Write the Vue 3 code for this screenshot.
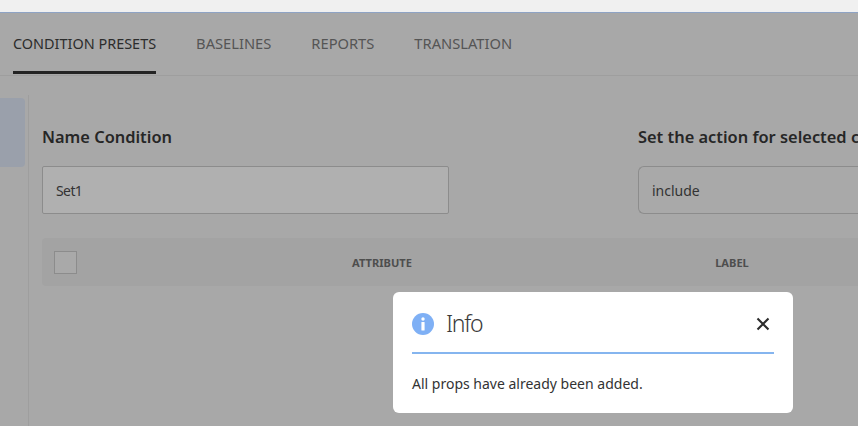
<script setup>
const tabs = ['CONDITION PRESETS', 'BASELINES', 'REPORTS', 'TRANSLATION']
</script>

<template>
  <div class="page">
    <div class="strip"></div>
    <nav class="tabs">
      <a v-for="(t, i) in tabs" :key="t" class="tab" :class="{ active: i === 0 }">{{ t }}</a>
    </nav>
    <div class="body">
      <aside class="side"><div class="side-item"></div></aside>
      <main class="main">
        <div class="fields">
          <div class="field">
            <label class="lbl">Name Condition</label>
            <div class="input name">Set1</div>
          </div>
          <div class="field second">
            <label class="lbl">Set the action for selected conditions</label>
            <div class="input select">include</div>
          </div>
        </div>
        <div class="thead">
          <div class="cell-check"><span class="check"></span></div>
          <div class="th">ATTRIBUTE</div>
          <div class="th">LABEL</div>
        </div>
      </main>
    </div>
    <div class="modal">
      <div class="m-head">
        <svg class="m-icon" width="22" height="22" viewBox="0 0 22 22">
          <circle cx="11" cy="11" r="11" fill="#7fb0f5" />
          <circle cx="11" cy="6" r="1.7" fill="#fff" />
          <rect x="9.4" y="9" width="3.2" height="8.5" rx="0.6" fill="#fff" />
        </svg>
        <span class="m-title">Info</span>
        <svg class="m-close" width="14" height="14" viewBox="0 0 14 14">
          <path d="M1.5 1.5 L12.5 12.5 M12.5 1.5 L1.5 12.5" stroke="#2c2c2c" stroke-width="2.1" fill="none" />
        </svg>
      </div>
      <p class="m-text">All props have already been added.</p>
    </div>
  </div>
</template>

<style>
html, body { margin: 0; padding: 0; }
</style>

<style scoped>
.page {
  position: relative;
  width: 858px;
  height: 426px;
  overflow: hidden;
  background: #a8a8a8;
  font-family: "Noto Sans", "Open Sans", sans-serif;
  color: #2a2a2a;
}
.strip {
  height: 12px;
  background: #f0f0f0;
  border-bottom: 1px solid #8ea3c4;
}
.tabs {
  display: flex;
  gap: 40px;
  height: 62px;
  padding-left: 13px;
  border-bottom: 1px solid #9e9e9e;
}
.tab {
  display: flex;
  align-items: center;
  height: 56px;
  padding-top: 2px;
  font-size: 14.7px;
  color: #555;
  border-bottom: 3px solid transparent;
}
.tab.active {
  font-size: 14.45px;
  color: #2c2c2c;
  border-bottom-color: #242424;
}
.body {
  display: flex;
  margin-top: 19px;
  height: 331px;
}
.side {
  width: 28px;
  flex: none;
  border-right: 1px solid #9e9e9e;
  padding-top: 3px;
}
.side-item {
  width: 25px;
  height: 69px;
  background: #9aa0ab;
  border-radius: 0 4px 4px 0;
}
.main {
  flex: 1;
  min-width: 0;
  padding: 31px 0 0 13px;
}
.fields {
  display: flex;
  gap: 189px;
}
.field {
  width: 407px;
  flex: none;
}
.field.second {
  width: 300px;
}
.lbl {
  display: block;
  font-size: 16.4px;
  font-weight: 600;
  line-height: 22px;
  color: #262626;
  white-space: nowrap;
  margin-bottom: 18px;
}
.input {
  box-sizing: border-box;
  height: 48px;
  display: flex;
  align-items: center;
  padding: 0 13px;
  font-size: 14px;
  color: #333;
  background: #b0b0b0;
  border: 1px solid #8c8c8c;
  border-radius: 2px;
}
.name {
  letter-spacing: -0.6px;
}
.select {
  background: #a9a9a9;
  border-radius: 6px 0 0 6px;
  border-right: none;
}
.thead {
  display: grid;
  grid-template-columns: 165px 350px 350px;
  align-items: center;
  height: 48px;
  margin-top: 24px;
  background: #a3a3a3;
  border-radius: 4px 0 0 4px;
}
.cell-check {
  padding-left: 12px;
  display: flex;
}
.check {
  width: 21px;
  height: 21px;
  border: 1px solid #8c8c8c;
  background: #a9a9a9;
}
.th {
  text-align: center;
  font-size: 11.1px;
  font-weight: 700;
  color: #4e4e4e;
}
.modal {
  position: absolute;
  left: 393px;
  top: 292px;
  width: 400px;
  height: 121px;
  box-sizing: border-box;
  padding: 0 19px;
  background: #fff;
  border-radius: 6px;
}
.m-head {
  display: flex;
  align-items: center;
  height: 56px;
  padding-top: 4px;
  border-bottom: 2px solid #85b5ef;
}
.m-icon { flex: none; }
.m-title {
  margin: -2px 0 0 12px;
  font-size: 23px;
  font-weight: 300;
  letter-spacing: -1.3px;
  color: #3a3a3a;
}
.m-close { margin-left: auto; margin-right: 4px; }
.m-text {
  margin: 20px 0 0;
  font-size: 14px;
  line-height: 20px;
  color: #333;
}
</style>
